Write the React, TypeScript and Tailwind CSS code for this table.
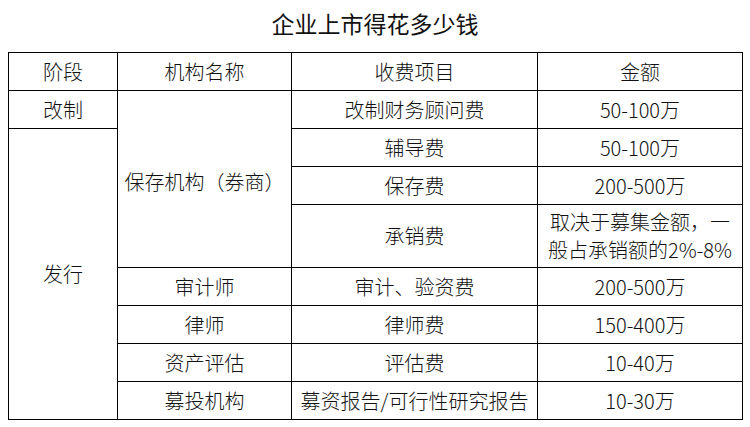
const font = { fontFamily: '"Noto Sans CJK SC", "Noto Sans", sans-serif' }

const cell = 'border border-black p-0 text-center align-middle'

export default function App() {
    return (
        <div className="w-[750px] h-[427px] bg-white text-[#111] px-2 font-light" style={font}>
            <div className="h-[52px] pt-[8px] text-center text-[23px] leading-[30px] font-normal">企业上市得花多少钱</div>
            <table className="w-[734px] border-collapse table-fixed text-[20px] leading-[28px]">
                <colgroup>
                    <col className="w-[109px]" />
                    <col className="w-[174px]" />
                    <col className="w-[246px]" />
                    <col className="w-[205px]" />
                </colgroup>
                <tbody>
                    <tr className="h-[38px]">
                        <td className={cell}>阶段</td>
                        <td className={cell}>机构名称</td>
                        <td className={cell}>收费项目</td>
                        <td className={cell}>金额</td>
                    </tr>
                    <tr className="h-[38px]">
                        <td className={cell}>改制</td>
                        <td className={cell} rowSpan={4}>
                            <span className="relative top-[3px]">保存机构（券商）</span>
                        </td>
                        <td className={cell}>改制财务顾问费</td>
                        <td className={cell}>50-100万</td>
                    </tr>
                    <tr className="h-[38px]">
                        <td className={cell} rowSpan={8}>发行</td>
                        <td className={cell}>辅导费</td>
                        <td className={cell}>50-100万</td>
                    </tr>
                    <tr className="h-[38px]">
                        <td className={cell}>保存费</td>
                        <td className={cell}>200-500万</td>
                    </tr>
                    <tr className="h-[63px]">
                        <td className={cell}>承销费</td>
                        <td className={cell}>取决于募集金额，一<br />般占承销额的2%-8%</td>
                    </tr>
                    <tr className="h-[38px]">
                        <td className={cell}>审计师</td>
                        <td className={cell}>审计、验资费</td>
                        <td className={cell}>200-500万</td>
                    </tr>
                    <tr className="h-[38px]">
                        <td className={cell}>律师</td>
                        <td className={cell}>律师费</td>
                        <td className={cell}>150-400万</td>
                    </tr>
                    <tr className="h-[38px]">
                        <td className={cell}>资产评估</td>
                        <td className={cell}>评估费</td>
                        <td className={cell}>10-40万</td>
                    </tr>
                    <tr className="h-[38px]">
                        <td className={cell}>募投机构</td>
                        <td className={cell}>募资报告/可行性研究报告</td>
                        <td className={cell}>10-30万</td>
                    </tr>
                </tbody>
            </table>
        </div>
    )
}
